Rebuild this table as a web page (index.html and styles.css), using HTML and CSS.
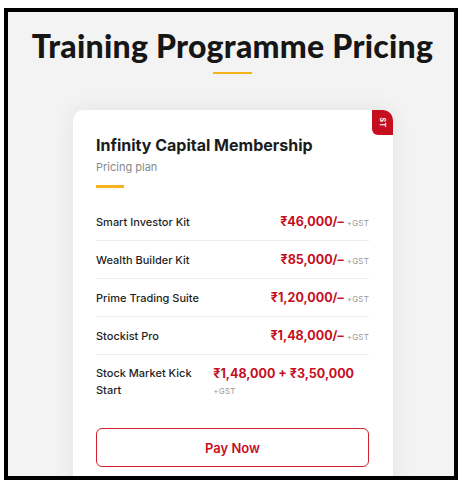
FILE: index.html
```html
<!DOCTYPE html>
<html lang="en">
<head>
<meta charset="utf-8">
<title>Training Programme Pricing</title>
<link rel="stylesheet" href="styles.css">
</head>
<body>
<div class="frame">
  <section class="pricing">
    <h1 class="heading">Training Programme Pricing</h1>
    <div class="heading-rule"></div>
    <div class="card">
      <div class="badge"><span>ST</span></div>
      <h2 class="card-title">Infinity Capital Membership</h2>
      <p class="card-sub">Pricing plan</p>
      <div class="card-rule"></div>
      <ul class="plans">
        <li class="plan">
          <span class="plan-name">Smart Investor Kit</span>
          <span class="plan-price">₹46,000/– <small>+GST</small></span>
        </li>
        <li class="plan">
          <span class="plan-name">Wealth Builder Kit</span>
          <span class="plan-price">₹85,000/– <small>+GST</small></span>
        </li>
        <li class="plan">
          <span class="plan-name">Prime Trading Suite</span>
          <span class="plan-price">₹1,20,000/– <small>+GST</small></span>
        </li>
        <li class="plan">
          <span class="plan-name">Stockist Pro</span>
          <span class="plan-price">₹1,48,000/– <small>+GST</small></span>
        </li>
        <li class="plan plan-wide">
          <span class="plan-name">Stock Market Kick Start</span>
          <span class="plan-price">₹1,48,000 + ₹3,50,000<small class="gst-below">+GST</small></span>
        </li>
      </ul>
      <button class="pay">Pay Now</button>
    </div>
  </section>
</div>
</body>
</html>
```

FILE: styles.css
```css
* { box-sizing: border-box; }

html, body {
  margin: 0;
  padding: 0;
  background: #ffffff;
}

body {
  padding: 8px 0 0 4px;
}

.frame {
  width: 454px;
  height: 472px;
  border: 4px solid #000;
  background: #f3f3f3;
  overflow: hidden;
}

.pricing {
  padding-top: 14px;
}

.heading {
  margin: 0;
  text-align: center;
  font-family: Lato, "Noto Sans", sans-serif;
  font-weight: 900;
  font-size: 32px;
  line-height: 40px;
  color: #161616;
  letter-spacing: 0.25px;
  padding-left: 3px;
}

.heading-rule {
  width: 39px;
  height: 2px;
  background: #f5b21b;
  margin: 6px auto 0;
  position: relative;
  left: 1px;
}

.card {
  position: relative;
  width: 320px;
  margin: 36px 0 0 65px;
  background: #fff;
  border-radius: 10px;
  box-shadow: 0 0 22px rgba(0, 0, 0, 0.07);
  padding: 24px 24px 30px 23px;
  font-family: Inter, "Noto Sans", sans-serif;
}

.badge {
  position: absolute;
  top: 0;
  right: 0;
  width: 21px;
  height: 25px;
  background: #c50f1f;
  border-radius: 0 10px 0 6px;
  display: flex;
  align-items: center;
  justify-content: center;
}

.badge span {
  transform: rotate(90deg);
  color: #fff;
  font-size: 7px;
  font-weight: 700;
  letter-spacing: 0.3px;
}

.card-title {
  margin: 0;
  font-size: 16px;
  line-height: 22px;
  font-weight: 700;
  color: #1b1b1b;
}

.card-sub {
  margin: 3px 0 0;
  font-size: 11px;
  line-height: 16px;
  color: #8a8a8a;
}

.card-rule {
  width: 28px;
  height: 3px;
  background: #f5b21b;
  margin-top: 10px;
}

.plans {
  list-style: none;
  margin: 15px 0 0;
  padding: 0;
}

.plan {
  display: flex;
  justify-content: space-between;
  align-items: center;
  height: 38px;
  border-bottom: 1px solid #ececec;
}

.plan-name {
  font-size: 11px;
  font-weight: 500;
  color: #1f1f1f;
}

.plan-price {
  font-size: 12.5px;
  font-weight: 700;
  color: #c50f1f;
  white-space: nowrap;
}

.plan-price small {
  font-size: 8px;
  font-weight: 400;
  color: #9a9a9a;
  letter-spacing: 0.2px;
}

.plan-wide {
  height: auto;
  border-bottom: none;
  align-items: flex-start;
  gap: 14px;
  padding: 10px 0 8px;
}

.plan-wide .plan-name {
  flex: 1 1 0;
  line-height: 17px;
}

.plan-wide .plan-price {
  flex: none;
  line-height: 17px;
  padding-right: 15px;
}

.gst-below {
  display: block;
  margin-top: 3px;
  line-height: 12px;
}

.pay {
  display: block;
  width: 100%;
  height: 39px;
  margin-top: 21px;
  background: #fff;
  border: 1.5px solid #d0202f;
  border-radius: 6px;
  color: #c50f1f;
  font-family: Inter, "Noto Sans", sans-serif;
  font-size: 13px;
  font-weight: 600;
  cursor: pointer;
}
```
